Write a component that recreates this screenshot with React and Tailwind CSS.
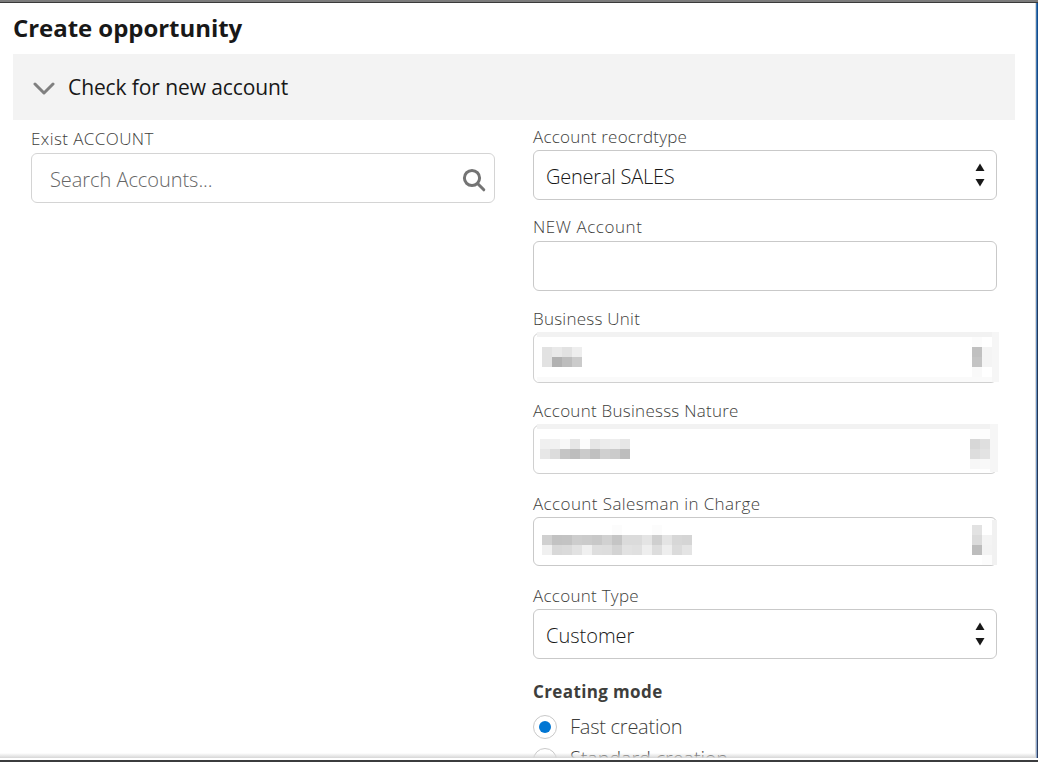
import React from 'react';

const Mosaic = ({ rows, className }) => (
  <div className={`absolute ${className}`}>
    {rows.map((row, y) => (
      <div key={y} className="flex">
        {row.split(' ').map((c, x) => (
          <span key={x} className="h-[10px] w-[10px]" style={{ background: `#${c}${c}${c}` }} />
        ))}
      </div>
    ))}
  </div>
);

const Label = ({ children, tracking, leading = 'leading-[24px]' }) => (
  <div className={`h-[26px] whitespace-nowrap text-[17px] font-light text-[#3e3e3c] ${leading} ${tracking}`}>{children}</div>
);

const Select = ({ children, tracking }) => (
  <div className="flex h-[50px] items-center justify-between rounded-[6px] border border-[#c9c9c9] bg-white pl-[12px] pr-[11px]">
    <span className={`whitespace-nowrap pt-[3px] text-[20px] font-light leading-[45px] text-[#181818] ${tracking}`}>{children}</span>
    <svg width="10" height="24" viewBox="0 0 10 24" fill="#181818">
      <path d="M5 0.5L9.5 8H0.5Z" />
      <path d="M5 23.5L9.5 16H0.5Z" />
    </svg>
  </div>
);

export default function App() {
  return (
    <div className="relative flex h-[762px] w-[1038px] flex-col overflow-hidden bg-white font-['Open_Sans','Noto_Sans',sans-serif]">
      <div className="h-[3px] shrink-0 border-b border-[#3a3a3a] bg-[#7b7b7b]" />
      <h1 className="h-[51px] shrink-0 whitespace-nowrap pl-[13px] text-[24px] font-bold leading-[50px] tracking-[-0.05px] text-[#181818]">
        Create opportunity
      </h1>
      <div className="ml-[13px] flex h-[66px] w-[1002px] shrink-0 items-center bg-[#f3f3f3] pl-5">
        <svg width="22" height="14" viewBox="0 0 22 14" fill="none" stroke="#808080" strokeWidth="3" strokeLinecap="round" strokeLinejoin="round" className="mt-1">
          <path d="M2 2L11 11L20 2" />
        </svg>
        <h2 className="ml-[13px] whitespace-nowrap text-[21px] leading-[30px] tracking-[-0.1px] text-[#181818]">Check for new account</h2>
      </div>
      <div className="flex gap-[38px] pl-[31px]">
        <div className="w-[464px] pt-[7px]">
          <Label tracking="tracking-[0.42px]">Exist ACCOUNT</Label>
          <div className="flex h-[50px] items-center justify-between rounded-[6px] border border-[#d4d4d4] pl-[18px] pr-[8px]">
            <span className="whitespace-nowrap pt-[3px] text-[20px] font-light leading-[45px] tracking-[-0.05px] text-[#666]">Search Accounts...</span>
            <svg width="24" height="24" viewBox="0 0 24 24" fill="none" stroke="#747474" strokeWidth="3" strokeLinecap="round" className="mt-1">
              <circle cx="10" cy="10" r="7.6" />
              <path d="M15.8 15.8L21.8 21.8" />
            </svg>
          </div>
        </div>
        <div className="w-[464px] pt-1">
          <Label tracking="tracking-[0.22px]" leading="leading-[26px]">Account reocrdtype</Label>
          <Select tracking="tracking-[-0.23px]">General SALES</Select>
          <div className="mt-[15px]">
            <Label tracking="tracking-[0.55px]">NEW Account</Label>
            <div className="h-[50px] rounded-[6px] border border-[#c9c9c9]" />
          </div>
          <div className="mt-[16px]">
            <Label tracking="tracking-[0.25px]">Business Unit</Label>
            <div className="relative h-[50px] rounded-[6px] border border-[#d0d0d0]">
              <div className="absolute left-[3px] top-[-2px] h-[5px] w-[462px] bg-[#f2f2f2]" />
              <div className="absolute bottom-0 left-[3px] h-[5px] w-[462px] bg-[#fafafa]" />
              <div className="absolute left-[458px] top-[-2px] h-[50px] w-[7px] bg-[#f6f6f6]" />
              <Mosaic className="left-[8px] top-[13px]" rows={['e2 e9 e2 ee', 'e2 b1 bd cb']} />
              <Mosaic className="left-[438px] top-[3px]" rows={['fc ff', 'c0 f4', 'c4 f4', 'f9 ff']} />
            </div>
          </div>
          <div className="mt-[16px]">
            <Label tracking="tracking-[0.26px]">Account Businesss Nature</Label>
            <div className="relative h-[49px] rounded-[6px] border border-[#d0d0d0]">
              <div className="absolute left-[3px] top-[-2px] h-[5px] w-[461px] bg-[#f2f2f2]" />
              <div className="absolute left-[456px] top-[-2px] h-[48px] w-[8px] bg-[#f6f6f6]" />
              <Mosaic className="left-[6px] top-[13px]" rows={['f0 f1 f8 e6 fc e6 ec ee e6', 'e7 dc c5 bd cb c0 d0 cb bd']} />
              <Mosaic className="left-[436px] top-[3px]" rows={['fd fd', 'd7 df', 'dd e3', 'f7 f9']} />
            </div>
          </div>
          <div className="mt-[17px]">
            <Label tracking="tracking-[0.4px]" leading="leading-[26px]">Account Salesman in Charge</Label>
            <div className="relative h-[49px] rounded-[6px] border border-[#c9c9c9]">
              <div className="absolute left-[458px] top-[2px] h-[45px] w-[5px] bg-[#f1f1f1]" />
              <Mosaic className="left-[8px] top-[7px]" rows={['ff ff ff ff ff ff ff fc ff ff ff fc ff ff ff', 'd0 c2 c3 cd cb c8 d1 c5 db db e4 cf e4 d7 d5', 'f0 d8 da e2 f0 de dd d3 e2 e0 ee dd ee db e4']} />
              <Mosaic className="left-[438px] top-[7px]" rows={['e2 ff', 'db f4', 'bd f3', 'ff fc']} />
            </div>
          </div>
          <div className="mt-[17px]">
            <Label tracking="tracking-[0.27px]" leading="leading-[26px]">Account Type</Label>
            <Select tracking="tracking-normal">Customer</Select>
          </div>
          <div className="mt-[19px] h-[28px] whitespace-nowrap text-[17px] font-bold leading-[28px] tracking-[0.38px] text-[#3e3e3c]">Creating mode</div>
          <div className="mt-[9px] flex h-[24px] items-center gap-[13px]">
            <span className="flex h-6 w-6 items-center justify-center rounded-full border border-[#c9c9c9]">
              <span className="h-3 w-3 rounded-full bg-[#0176d3]" />
            </span>
            <span className="whitespace-nowrap text-[20px] font-light leading-6 tracking-[-0.25px] text-[#3e3e3c]">Fast creation</span>
          </div>
          <div className="mt-[9px] flex h-[24px] items-center gap-[13px]">
            <span className="h-6 w-6 rounded-full border border-[#c9c9c9]" />
            <span className="-mt-0.5 whitespace-nowrap text-[20px] font-light leading-6 tracking-[-0.18px] text-[#3e3e3c]">Standard creation</span>
          </div>
        </div>
      </div>
      <div className="absolute bottom-0 left-0 w-full">
        <div className="h-[5px] bg-gradient-to-b from-[#d6d6d6]/0 to-[#d6d6d6]" />
        <div className="h-[2px] bg-white" />
        <div className="h-[2px] bg-[#3b3c3e]" />
      </div>
      <div className="absolute right-0 top-[3px] flex h-[755px] w-[3px]">
        <div className="w-px bg-[#d8d8d8]" />
        <div className="w-px bg-gradient-to-b from-[#3f78b4] to-[#8fa8cd]" />
        <div className="w-px bg-gradient-to-b from-[#104e91] via-[#203554] to-[#2c3e61]" />
      </div>
    </div>
  );
}
